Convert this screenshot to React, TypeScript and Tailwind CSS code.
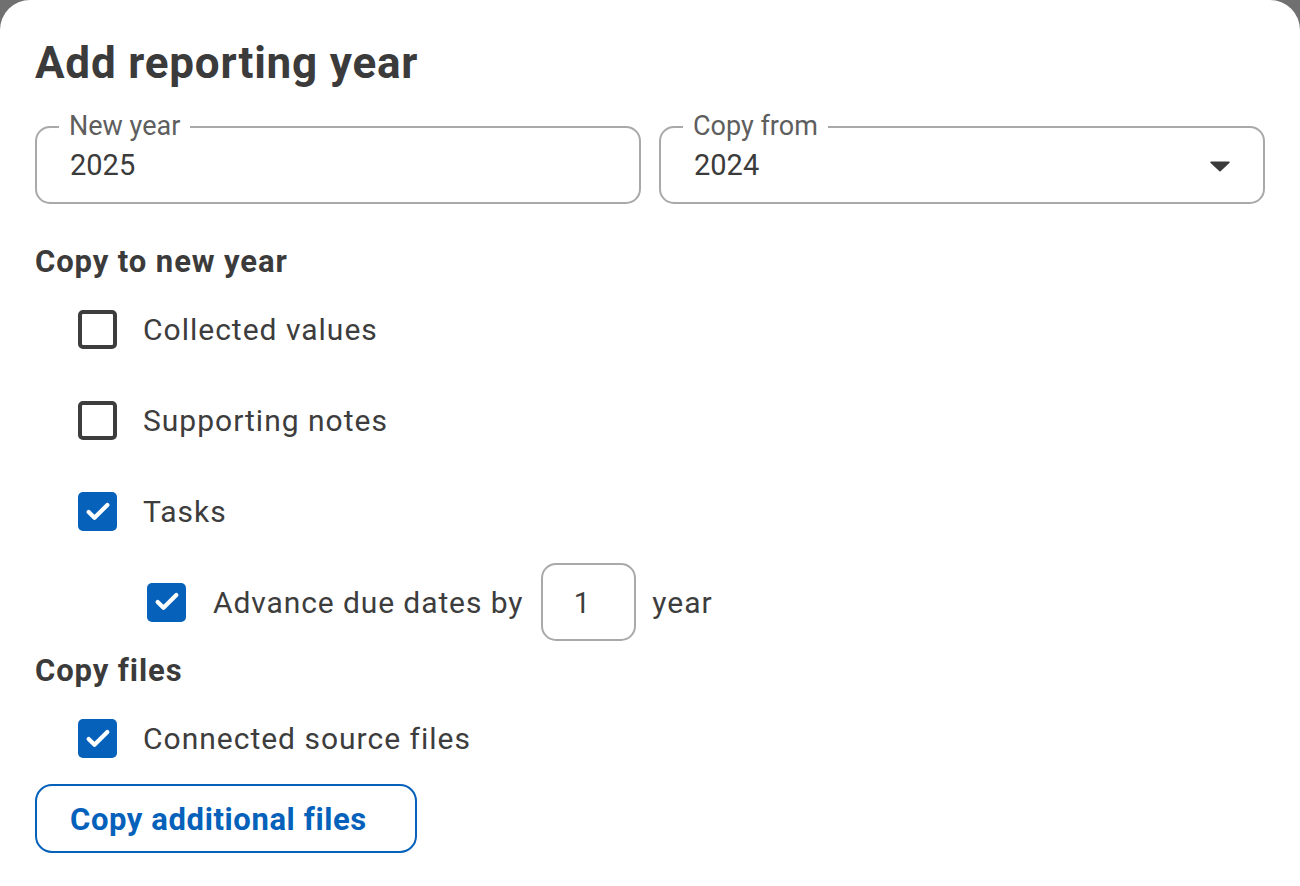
import { Check } from "lucide-react";

function Box({ checked }: { checked?: boolean }) {
  if (checked) {
    return (
      <span className="flex h-[39px] w-[39px] shrink-0 items-center justify-center rounded-[5px] bg-[#0561ba]">
        <Check className="h-[28px] w-[28px] text-white" strokeWidth={3.6} />
      </span>
    );
  }
  return <span className="h-[39px] w-[39px] shrink-0 rounded-[5px] border-[4px] border-[#3d3d3d]" />;
}

function Field({ label, value, select }: { label: string; value: string; select?: boolean }) {
  return (
    <fieldset className="h-[90px] flex-1 rounded-[15px] border-2 border-[#a9a9a9] pl-[33px] pr-[34px]">
      <legend className="-ml-[11px] px-[10px] pb-[2px] text-[27px] leading-[24px] text-[#5e5e5e]">{label}</legend>
      <div className="flex h-[51px] items-center justify-between">
        <span className="text-[29px] text-[#3b3b3b]">{value}</span>
        {select && (
          <svg width="20" height="12" viewBox="0 0 20 12" className="-mr-[1px]">
            <path d="M1 1.5h18a.8.8 0 0 1 .6 1.3l-9 8.4a.8.8 0 0 1-1.2 0l-9-8.4A.8.8 0 0 1 1 1.5z" fill="#3b3b3b" />
          </svg>
        )}
      </div>
    </fieldset>
  );
}

function Row({ label, checked }: { label: string; checked?: boolean }) {
  return (
    <label className="flex h-[39px] items-center gap-[26px] pl-[43px]">
      <Box checked={checked} />
      <span className="text-[30px] tracking-[1px] text-[#3d3d3d]">{label}</span>
    </label>
  );
}

export default function App() {
  return (
    <div className="h-[886px] w-[1300px] overflow-hidden bg-[#707070] font-['Roboto',sans-serif]">
      <div className="h-full rounded-t-[30px] bg-white px-[35px] pt-[35px]">
        <h1 className="text-[44px] font-bold leading-[56px] tracking-[0.8px] text-[#3b3b3b]">Add reporting year</h1>

        <div className="mt-[23px] flex gap-[18px]">
          <Field label="New year" value="2025" />
          <Field label="Copy from" value="2024" select />
        </div>

        <h2 className="mt-[39px] text-[31px] font-bold leading-[38px] tracking-[0.9px] text-[#3b3b3b]">Copy to new year</h2>

        <div className="mt-[29px] flex flex-col gap-[52px]">
          <Row label="Collected values" />
          <Row label="Supporting notes" />
          <Row label="Tasks" checked />
        </div>

        <div className="mt-[32px] flex h-[78px] items-center pl-[112px]">
          <Box checked />
          <span className="ml-[27px] text-[30px] tracking-[0.9px] text-[#3d3d3d]">Advance due dates by</span>
          <span className="ml-[18px] flex h-[78px] w-[95px] items-center justify-center rounded-[15px] border-2 border-[#a9a9a9] pr-[14px] pt-[3px] text-[29px] text-[#3d3d3d]">
            1
          </span>
          <span className="ml-[16px] text-[30px] tracking-[1px] text-[#3d3d3d]">year</span>
        </div>

        <h2 className="mt-[11px] text-[31px] font-bold leading-[38px] tracking-[0.9px] text-[#3b3b3b]">Copy files</h2>

        <div className="mt-[29px]">
          <Row label="Connected source files" checked />
        </div>

        <button className="mt-[26px] flex h-[69px] w-[382px] items-center rounded-[17px] border-2 border-[#0561ba] pl-[33px] pt-[3px] text-[31px] font-bold tracking-[0.6px] text-[#0561ba]">
          Copy additional files
        </button>
      </div>
    </div>
  );
}
